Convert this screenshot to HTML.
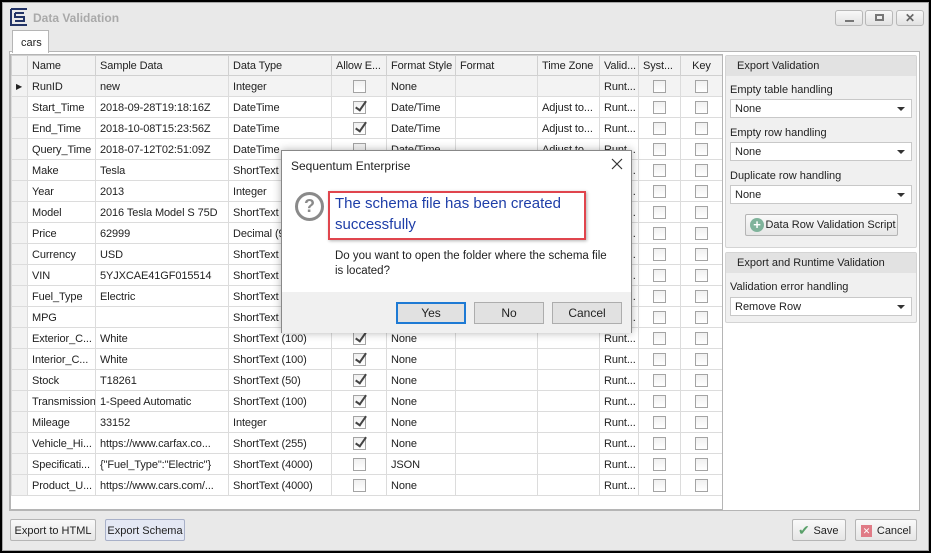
<!DOCTYPE html>
<html><head><style>
*{box-sizing:border-box;margin:0;padding:0}
body{width:931px;height:553px;background:#000;font-family:"Liberation Sans",sans-serif;font-size:11px;color:#222;position:relative;overflow:hidden}
.win{position:absolute;left:2px;top:2px;width:927px;height:549px;background:#e9e9e9;border:1px solid #a8a8a8}
.title{position:absolute;left:30px;top:8px;font-size:12px;font-weight:bold;color:#a9a9a9}
.wb{position:absolute;top:7px;width:28px;height:16px;border:1px solid #b8b8b8;border-radius:3px;background:linear-gradient(#f8f8f8,#e2e2e2)}
.tabarea{position:absolute;left:9px;top:51px;width:911px;height:460px;border:1px solid #b5b5b5;background:#fff}
.tab{position:absolute;left:12px;top:30px;width:37px;height:23px;background:#fff;border:1px solid #b5b5b5;border-bottom:none;padding:6px 0 0 8px;font-size:11px;z-index:2}
table{position:absolute;left:11px;top:55px;border-collapse:collapse;table-layout:fixed;width:711px}
td,th{height:21px;border:1px solid #dcdcdc;white-space:nowrap;overflow:hidden;padding:1px 4px 0;font-weight:normal;text-align:left;font-size:11px;letter-spacing:-0.1px}
th{height:20px;background:#f2f2f2;border-color:#d0d0d0}
td.rh,th.rh{background:#f2f2f2;padding:0}
.cb{display:inline-block;width:13px;height:13px;border:1px solid #a4a4a4;background:linear-gradient(#f0f0f0,#fff);vertical-align:middle;position:relative}
.ck::after{content:"";position:absolute;left:4px;top:-3px;width:4px;height:10px;border:solid #444;border-width:0 2px 2px 0;transform:rotate(35deg)}
.c{text-align:center}
.gridbox{position:absolute;left:10px;top:54px;width:713px;height:456px;border:1px solid #b5b5b5}
.panel{position:absolute;left:725px;width:192px;background:#f0f0f0;border:1px solid #d4d4d4;border-radius:2px}
.ph{height:20px;background:#e2e2e2;padding:4px 0 0 11px;font-size:11px}
.lbl{position:absolute;left:4px;font-size:11px}
.sel{position:absolute;left:4px;width:182px;height:19px;background:#fff;border:1px solid #c8c8c8;padding:3px 0 0 4px}
.sel::after{content:"";position:absolute;right:6px;top:7px;border:4px solid transparent;border-top:4px solid #333;border-bottom:none}
.btn{position:absolute;border:1px solid #b5b5b5;border-radius:2px;background:linear-gradient(#fafafa,#e6e6e6);font-size:11px;text-align:center}
.dlg{position:absolute;left:281px;top:150px;width:351px;height:183px;background:#fff;border:1px solid #888;box-shadow:0 0 8px rgba(0,0,0,.3)}
.dbtn{position:absolute;top:151px;width:70px;height:22px;border:1px solid #adadad;background:#e1e1e1;font-size:12px;text-align:center;padding-top:3px}
</style></head><body>
<div class="win">
<svg style="position:absolute;left:7px;top:5px" width="18" height="18" viewBox="0 0 18 18"><path d="M1 1h16M1 1v16h16M5 5h9M5 5v4h9v4H5" stroke="#223366" stroke-width="2" fill="none"/></svg>
<div class="title">Data Validation</div>
<div class="wb" style="left:832px"><div style="position:absolute;left:9px;top:9px;width:9px;height:2px;background:#777"></div></div>
<div class="wb" style="left:862px"><div style="position:absolute;left:9px;top:3px;width:9px;height:7px;border:2px solid #777"></div></div>
<div class="wb" style="left:893px;font-size:12px;font-weight:bold;color:#666;text-align:center;line-height:14px">✕</div>
</div>
<div class="tabarea"></div>
<div class="tab">cars</div>
<table>
<colgroup><col style="width:16px"><col style="width:68px"><col style="width:133px"><col style="width:103px"><col style="width:55px"><col style="width:69px"><col style="width:82px"><col style="width:62px"><col style="width:39px"><col style="width:42px"><col style="width:42px"></colgroup>
<tr><th class="rh"></th><th>Name</th><th>Sample Data</th><th>Data Type</th><th>Allow E...</th><th>Format Style</th><th>Format</th><th>Time Zone</th><th>Valid...</th><th>Syst...</th><th class="c">Key</th></tr>
<tr style="background:#f3f3f3"><td class="rh" style="font-size:8px;padding-left:4px">▶</td><td>RunID</td><td>new</td><td>Integer</td><td class="c"><span class="cb"></span></td><td>None</td><td></td><td></td><td>Runt...</td><td class="c"><span class="cb"></span></td><td class="c"><span class="cb"></span></td></tr>
<tr><td class="rh"></td><td>Start_Time</td><td>2018-09-28T19:18:16Z</td><td>DateTime</td><td class="c"><span class="cb ck"></span></td><td>Date/Time</td><td></td><td>Adjust to...</td><td>Runt...</td><td class="c"><span class="cb"></span></td><td class="c"><span class="cb"></span></td></tr>
<tr><td class="rh"></td><td>End_Time</td><td>2018-10-08T15:23:56Z</td><td>DateTime</td><td class="c"><span class="cb ck"></span></td><td>Date/Time</td><td></td><td>Adjust to...</td><td>Runt...</td><td class="c"><span class="cb"></span></td><td class="c"><span class="cb"></span></td></tr>
<tr><td class="rh"></td><td>Query_Time</td><td>2018-07-12T02:51:09Z</td><td>DateTime</td><td class="c"><span class="cb"></span></td><td>Date/Time</td><td></td><td>Adjust to...</td><td>Runt...</td><td class="c"><span class="cb"></span></td><td class="c"><span class="cb"></span></td></tr>
<tr><td class="rh"></td><td>Make</td><td>Tesla</td><td>ShortText (100)</td><td class="c"><span class="cb ck"></span></td><td>None</td><td></td><td></td><td>Runt...</td><td class="c"><span class="cb"></span></td><td class="c"><span class="cb"></span></td></tr>
<tr><td class="rh"></td><td>Year</td><td>2013</td><td>Integer</td><td class="c"><span class="cb ck"></span></td><td>None</td><td></td><td></td><td>Runt...</td><td class="c"><span class="cb"></span></td><td class="c"><span class="cb"></span></td></tr>
<tr><td class="rh"></td><td>Model</td><td>2016 Tesla Model S 75D</td><td>ShortText (100)</td><td class="c"><span class="cb ck"></span></td><td>None</td><td></td><td></td><td>Runt...</td><td class="c"><span class="cb"></span></td><td class="c"><span class="cb"></span></td></tr>
<tr><td class="rh"></td><td>Price</td><td>62999</td><td>Decimal (9,2)</td><td class="c"><span class="cb ck"></span></td><td>None</td><td></td><td></td><td>Runt...</td><td class="c"><span class="cb"></span></td><td class="c"><span class="cb"></span></td></tr>
<tr><td class="rh"></td><td>Currency</td><td>USD</td><td>ShortText (100)</td><td class="c"><span class="cb ck"></span></td><td>None</td><td></td><td></td><td>Runt...</td><td class="c"><span class="cb"></span></td><td class="c"><span class="cb"></span></td></tr>
<tr><td class="rh"></td><td>VIN</td><td>5YJXCAE41GF015514</td><td>ShortText (100)</td><td class="c"><span class="cb ck"></span></td><td>None</td><td></td><td></td><td>Runt...</td><td class="c"><span class="cb"></span></td><td class="c"><span class="cb"></span></td></tr>
<tr><td class="rh"></td><td>Fuel_Type</td><td>Electric</td><td>ShortText (100)</td><td class="c"><span class="cb ck"></span></td><td>None</td><td></td><td></td><td>Runt...</td><td class="c"><span class="cb"></span></td><td class="c"><span class="cb"></span></td></tr>
<tr><td class="rh"></td><td>MPG</td><td></td><td>ShortText (100)</td><td class="c"><span class="cb ck"></span></td><td>None</td><td></td><td></td><td>Runt...</td><td class="c"><span class="cb"></span></td><td class="c"><span class="cb"></span></td></tr>
<tr><td class="rh"></td><td>Exterior_C...</td><td>White</td><td>ShortText (100)</td><td class="c"><span class="cb ck"></span></td><td>None</td><td></td><td></td><td>Runt...</td><td class="c"><span class="cb"></span></td><td class="c"><span class="cb"></span></td></tr>
<tr><td class="rh"></td><td>Interior_C...</td><td>White</td><td>ShortText (100)</td><td class="c"><span class="cb ck"></span></td><td>None</td><td></td><td></td><td>Runt...</td><td class="c"><span class="cb"></span></td><td class="c"><span class="cb"></span></td></tr>
<tr><td class="rh"></td><td>Stock</td><td>T18261</td><td>ShortText (50)</td><td class="c"><span class="cb ck"></span></td><td>None</td><td></td><td></td><td>Runt...</td><td class="c"><span class="cb"></span></td><td class="c"><span class="cb"></span></td></tr>
<tr><td class="rh"></td><td>Transmission</td><td>1-Speed Automatic</td><td>ShortText (100)</td><td class="c"><span class="cb ck"></span></td><td>None</td><td></td><td></td><td>Runt...</td><td class="c"><span class="cb"></span></td><td class="c"><span class="cb"></span></td></tr>
<tr><td class="rh"></td><td>Mileage</td><td>33152</td><td>Integer</td><td class="c"><span class="cb ck"></span></td><td>None</td><td></td><td></td><td>Runt...</td><td class="c"><span class="cb"></span></td><td class="c"><span class="cb"></span></td></tr>
<tr><td class="rh"></td><td>Vehicle_Hi...</td><td>https://www.carfax.co...</td><td>ShortText (255)</td><td class="c"><span class="cb ck"></span></td><td>None</td><td></td><td></td><td>Runt...</td><td class="c"><span class="cb"></span></td><td class="c"><span class="cb"></span></td></tr>
<tr><td class="rh"></td><td>Specificati...</td><td>{"Fuel_Type":"Electric"}</td><td>ShortText (4000)</td><td class="c"><span class="cb"></span></td><td>JSON</td><td></td><td></td><td>Runt...</td><td class="c"><span class="cb"></span></td><td class="c"><span class="cb"></span></td></tr>
<tr><td class="rh"></td><td>Product_U...</td><td>https://www.cars.com/...</td><td>ShortText (4000)</td><td class="c"><span class="cb"></span></td><td>None</td><td></td><td></td><td>Runt...</td><td class="c"><span class="cb"></span></td><td class="c"><span class="cb"></span></td></tr>
</table>
<div class="gridbox"></div>

<div class="panel" style="top:55px;height:193px">
<div class="ph">Export Validation</div>
<div class="lbl" style="top:28px">Empty table handling</div>
<div class="sel" style="top:43px">None</div>
<div class="lbl" style="top:71px">Empty row handling</div>
<div class="sel" style="top:86px">None</div>
<div class="lbl" style="top:114px">Duplicate row handling</div>
<div class="sel" style="top:129px">None</div>
<div class="btn" style="left:19px;top:158px;width:153px;height:22px;padding:4px 0 0 18px">Data Row Validation Script
<span style="position:absolute;left:4px;top:3px;width:14px;height:14px;border-radius:50%;background:#7fb39b;color:#fff;font-weight:bold;font-size:13px;line-height:14px">+</span></div>
</div>
<div class="panel" style="top:252px;height:71px">
<div class="ph">Export and Runtime Validation</div>
<div class="lbl" style="top:28px">Validation error handling</div>
<div class="sel" style="top:44px">Remove Row</div>
</div>

<div class="btn" style="left:10px;top:519px;width:86px;height:22px;padding-top:5px">Export to HTML</div>
<div class="btn" style="left:105px;top:519px;width:80px;height:22px;padding-top:5px;background:#e4e8f4;border-color:#a8b0c8">Export Schema</div>
<div class="btn" style="left:792px;top:519px;width:54px;height:22px;padding:5px 0 0 14px"><span style="position:absolute;left:5px;top:2px;color:#5aa06a;font-size:14px">✔</span>Save</div>
<div class="btn" style="left:855px;top:519px;width:62px;height:22px;padding:5px 0 0 16px"><span style="position:absolute;left:5px;top:5px;width:11px;height:12px;background:#e07b86;color:#fff;font-size:9px;line-height:12px">✕</span>Cancel</div>

<div class="dlg">
<div style="position:absolute;left:9px;top:8px;font-size:12px">Sequentum Enterprise</div>
<svg style="position:absolute;left:329px;top:7px" width="12" height="12" viewBox="0 0 12 12"><path d="M1 1L11 11M11 1L1 11" stroke="#333" stroke-width="1.2"/></svg>
<div style="position:absolute;left:13px;top:41px;width:29px;height:29px;border:3px solid #8a8a8a;border-radius:50%;text-align:center;font-weight:bold;font-size:18px;color:#8a8a8a;line-height:23px">?</div>
<div style="position:absolute;left:46px;top:40px;width:258px;height:49px;border:2px solid #e0454d;box-shadow:1px 1px 3px rgba(0,0,0,.3)"></div>
<div style="position:absolute;left:53px;top:42px;font-size:15px;color:#1e3ea8;line-height:21px">The schema file has been created<br>successfully</div>
<div style="position:absolute;left:53px;top:98px;font-size:11.5px;line-height:15px">Do you want to open the folder where the schema file<br>is located?</div>
<div style="position:absolute;left:0;top:141px;width:349px;height:41px;background:#f0f0f0"></div>
<div class="dbtn" style="left:114px;border:2px solid #1e7ad4;padding-top:2px">Yes</div>
<div class="dbtn" style="left:192px">No</div>
<div class="dbtn" style="left:270px">Cancel</div>
</div>
</body></html>
